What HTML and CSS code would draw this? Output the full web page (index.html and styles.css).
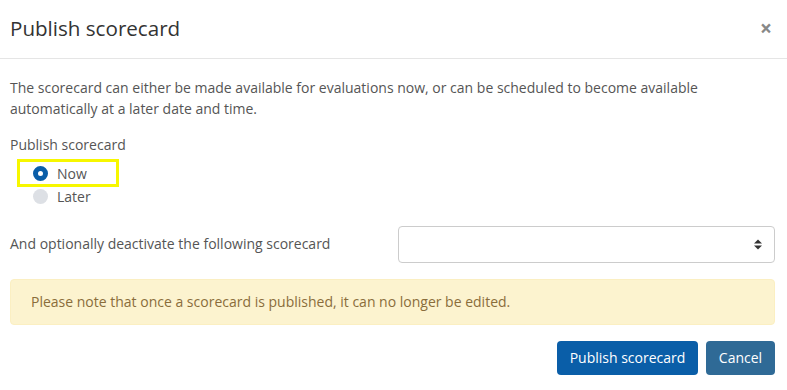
FILE: index.html
```html
<!DOCTYPE html>
<html>
<head>
<meta charset="utf-8">
<link rel="stylesheet" href="styles.css">
</head>
<body>
<div class="modal">
  <div class="modal-header">
    <h4 class="modal-title">Publish scorecard</h4>
    <span class="close">&times;</span>
  </div>
  <div class="modal-body">
    <p class="intro">The scorecard can either be made available for evaluations now, or can be scheduled to become available automatically at a later date and time.</p>
    <div class="group-label">Publish scorecard</div>
    <div class="radios">
      <label class="radio highlight"><span class="dot checked"></span>Now</label>
      <label class="radio"><span class="dot"></span>Later</label>
    </div>
    <div class="form-row">
      <div class="row-label">And optionally deactivate the following scorecard</div>
      <div class="select">
        <svg class="caret" width="8" height="11" viewBox="0 0 8 11"><path d="M0 4.5 L4 0.5 L8 4.5 Z M0 6.5 L8 6.5 L4 10.5 Z" fill="#333"/></svg>
      </div>
    </div>
    <div class="alert">Please note that once a scorecard is published, it can no longer be edited.</div>
  </div>
  <div class="modal-footer">
    <button class="btn btn-primary">Publish scorecard</button>
    <button class="btn btn-secondary">Cancel</button>
  </div>
</div>
</body>
</html>
```
FILE: styles.css
```css
html, body {
  margin: 0;
  padding: 0;
  background: #fff;
}
body {
  font-family: "Open Sans", "Liberation Sans", sans-serif;
  font-size: 14px;
  color: #555;
}
.modal {
  width: 787px;
}
.modal-header {
  display: flex;
  align-items: center;
  justify-content: space-between;
  padding: 14px 15px 16px 10px;
  border-bottom: 1px solid #e5e5e5;
}
.modal-title {
  margin: 0;
  font-size: 20.6px;
  font-weight: 400;
  line-height: 28px;
  color: #333;
}
.close {
  font-size: 21px;
  font-weight: 700;
  color: #888;
  line-height: 20px;
}
.modal-body {
  padding: 18px 12px 0 10px;
}
.intro {
  margin: 0;
  line-height: 21px;
}
.group-label {
  margin-top: 15px;
  line-height: 21px;
}
.radios {
  display: flex;
  flex-direction: column;
  align-items: flex-start;
  margin-top: 4px;
  margin-left: 7px;
}
.radio {
  display: flex;
  align-items: center;
  height: 24px;
  padding: 0 0 0 16px;
  box-sizing: border-box;
  line-height: 21px;
}
.radio.highlight {
  border: 3px solid #f7f700;
  width: 102px;
  height: 28px;
  padding-left: 13px;
  margin-bottom: -3px;
}
.dot {
  width: 15px;
  height: 15px;
  border-radius: 50%;
  background: #dde0e5;
  margin-right: 9px;
  box-sizing: border-box;
  flex: none;
}
.dot.checked {
  background: #fff;
  border: 5px solid #0a5ea8;
}
.form-row {
  display: grid;
  grid-template-columns: 388px 1fr;
  align-items: center;
  margin-top: 18px;
}
.row-label {
  line-height: 21px;
  margin-top: -2px;
}
.select {
  height: 37px;
  border: 1px solid #ccc;
  border-radius: 4px;
  box-sizing: border-box;
  display: flex;
  align-items: center;
  justify-content: flex-end;
  padding-right: 12px;
}
.alert {
  margin-top: 16px;
  background: #fcf3cf;
  border: 1px solid #fbefc2;
  border-radius: 4px;
  color: #8a6d3b;
  padding: 11px 20px 12px;
  line-height: 21px;
}
.modal-footer {
  display: flex;
  justify-content: flex-end;
  gap: 8px;
  padding: 16px 12px 0 10px;
}
.btn {
  font-family: inherit;
  font-size: 14px;
  color: #fff;
  border: none;
  border-radius: 4px;
  height: 34px;
  padding: 0 12px;
  line-height: 20px;
  white-space: nowrap;
}
.btn-primary {
  background: #0a5ea8;
  width: 141px;
}
.btn-secondary {
  background: #2f6a96;
  width: 69px;
}
```
